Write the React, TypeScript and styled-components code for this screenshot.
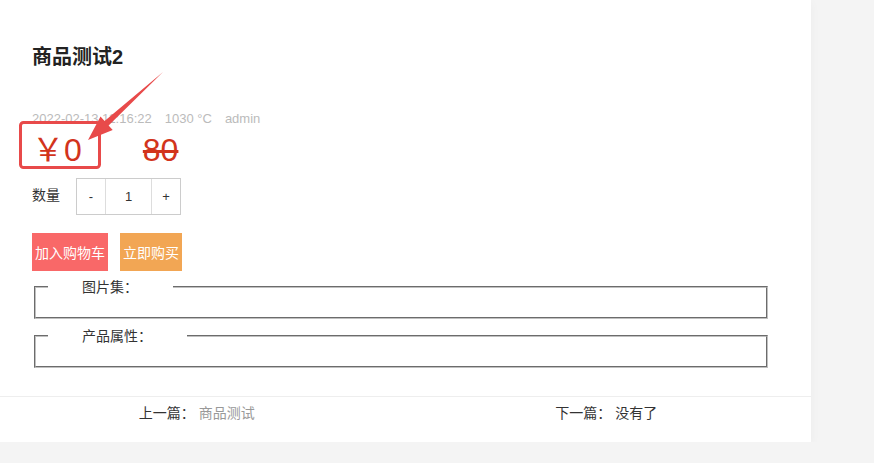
import React from "react";
import styled, { createGlobalStyle } from "styled-components";

const GlobalStyle = createGlobalStyle`
  body {
    margin: 0;
    background: #f4f4f4;
    font-family: "Liberation Sans", "Noto Sans CJK SC", sans-serif;
    color: #333;
  }
`;

const Card = styled.div`
  position: relative;
  width: 811px;
  background: #ffffff;
  box-shadow: 0 3px 10px rgba(0, 0, 0, 0.04);
`;

const Content = styled.div`
  padding: 43px 42px 28px 32px;
`;

const Title = styled.h2`
  margin: 0;
  font-size: 20px;
  line-height: 28px;
  font-weight: 700;
  color: #222;
`;

const Meta = styled.div`
  margin-top: 38px;
  display: flex;
  gap: 13px;
  font-size: 13px;
  line-height: 20px;
  color: #bbb;
`;

const PriceRow = styled.div`
  margin-top: 1px;
  display: flex;
  align-items: center;
  gap: 61px;
  height: 40px;
`;

const Price = styled.span<{ $old?: boolean }>`
  font-size: 32px;
  line-height: 40px;
  color: #d2341c;
  text-decoration: ${(p) => (p.$old ? "line-through" : "none")};
`;

const QtyRow = styled.div`
  margin-top: 8px;
  display: flex;
  align-items: center;
  gap: 16px;
  font-size: 14px;
`;

const QtyLabel = styled.span`
  line-height: 20px;
  margin-top: -3px;
`;

const QtyBox = styled.div`
  display: flex;
  height: 35px;
  border: 1px solid #ccc;
`;

const QtyCell = styled.span<{ $w: number; $last?: boolean }>`
  width: ${(p) => p.$w}px;
  display: flex;
  align-items: center;
  justify-content: center;
  font-size: 13px;
  color: #333;
  border-right: ${(p) => (p.$last ? "none" : "1px solid #ddd")};
`;

const Buttons = styled.div`
  margin-top: 18px;
  display: flex;
  gap: 12px;
`;

const Button = styled.button<{ $bg: string }>`
  height: 38px;
  padding: 0 3px;
  border: none;
  background: ${(p) => p.$bg};
  color: #fff;
  font-family: inherit;
  font-size: 14px;
`;

const Field = styled.fieldset`
  margin: 6px 1px 0 2px;
  padding: 0 12px 20px;
  border: 2px groove #c0c0c0;
  & + & {
    margin-top: 7px;
  }
`;

const Legend = styled.legend`
  padding: 0 35px 0 34px;
  font-size: 14px;
  line-height: 20px;
  color: #333;
`;

const Footer = styled.div`
  border-top: 1px solid #eee;
  display: grid;
  grid-template-columns: 1fr 1fr;
  height: 45px;
  align-items: center;
  font-size: 14px;
`;

const Nav = styled.div<{ $shift?: number }>`
  text-align: center;
  color: #333;
  padding-bottom: 16px;
  padding-right: ${(p) => p.$shift ?? 0}px;
`;

const NavLink = styled.span<{ $muted?: boolean }>`
  margin-left: 4px;
  color: ${(p) => (p.$muted ? "#999" : "#333")};
`;

const Annotation = styled.svg`
  position: absolute;
  left: 0;
  top: 0;
  pointer-events: none;
`;

export default function App() {
  return (
    <>
      <GlobalStyle />
      <Card>
        <Content>
          <Title>商品测试2</Title>
          <Meta>
            <span>2022-02-13 11:16:22</span>
            <span>1030 °C</span>
            <span>admin</span>
          </Meta>
          <PriceRow>
            <Price>￥0</Price>
            <Price $old>80</Price>
          </PriceRow>
          <QtyRow>
            <QtyLabel>数量</QtyLabel>
            <QtyBox>
              <QtyCell $w={28}>-</QtyCell>
              <QtyCell $w={45}>1</QtyCell>
              <QtyCell $w={28} $last>+</QtyCell>
            </QtyBox>
          </QtyRow>
          <Buttons>
            <Button $bg="#f96868">加入购物车</Button>
            <Button $bg="#f2a654">立即购买</Button>
          </Buttons>
          <Field>
            <Legend>图片集：</Legend>
          </Field>
          <Field>
            <Legend>产品属性：</Legend>
          </Field>
        </Content>
        <Footer>
          <Nav $shift={12}>
            上一篇：<NavLink $muted>商品测试</NavLink>
          </Nav>
          <Nav $shift={4}>
            下一篇：<NavLink>没有了</NavLink>
          </Nav>
        </Footer>
        <Annotation width="200" height="180">
          <rect x="20.5" y="122.5" width="79" height="45" rx="3" fill="none" stroke="#e84a4a" strokeWidth="3" />
          <path d="M163 72 L104.6 121 L100.5 116.5 L88 140 L112.7 129.9 L108.6 125.4 Z" fill="#e84a4a" />
        </Annotation>
      </Card>
    </>
  );
}
